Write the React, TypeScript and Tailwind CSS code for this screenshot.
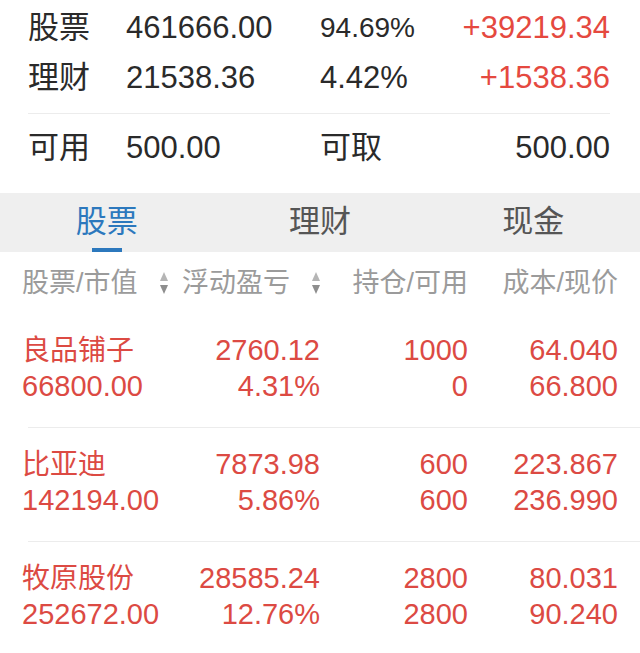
const summary = [
  { label: "股票", value: "461666.00", pct: "94.69%", pctSize: "text-[28px]", gain: "+39219.34" },
  { label: "理财", value: "21538.36", pct: "4.42%", pctSize: "text-[31px]", gain: "+1538.36" },
]

const holdings = [
  { name: "良品铺子", mv: "66800.00", pl: "2760.12", rate: "4.31%", qty: "1000", avail: "0", cost: "64.040", price: "66.800" },
  { name: "比亚迪", mv: "142194.00", pl: "7873.98", rate: "5.86%", qty: "600", avail: "600", cost: "223.867", price: "236.990" },
  { name: "牧原股份", mv: "252672.00", pl: "28585.24", rate: "12.76%", qty: "2800", avail: "2800", cost: "80.031", price: "90.240" },
]

const tabs = ["股票", "理财", "现金"]

const SortIcon = () => (
  <span className="flex flex-col items-center gap-[4px]">
    <svg width="8" height="9" viewBox="0 0 8 9" className="block">
      <path d="M4 0 L8 9 L0 9 Z" fill="#b5b5b5" />
    </svg>
    <svg width="8" height="9" viewBox="0 0 8 9" className="block">
      <path d="M0 0 L8 0 L4 9 Z" fill="#8e8e8e" />
    </svg>
  </span>
)

export default function App() {
  return (
    <div
      className="w-[640px] h-[653px] overflow-hidden bg-white"
      style={{ fontFamily: '"Liberation Sans", "Noto Sans CJK SC", sans-serif' }}
    >
      {/* account summary */}
      <div className="pl-[28px] pr-[30px] pt-[3px]">
        {summary.map((s) => (
          <div key={s.label} className="grid grid-cols-[98px_194px_1fr_auto] items-center h-[50px] text-[#2a2a2a]">
            <span className="text-[31px]">{s.label}</span>
            <span className="text-[31px]">{s.value}</span>
            <span className={s.pctSize}>{s.pct}</span>
            <span className="text-[31px] text-[#e5493f]">{s.gain}</span>
          </div>
        ))}
        <div className="mt-[10px] border-t border-[#ececec] grid grid-cols-[98px_194px_1fr_auto] items-center h-[69px] text-[#2a2a2a]">
          <span className="text-[31px]">可用</span>
          <span className="text-[31px]">500.00</span>
          <span className="text-[31px]">可取</span>
          <span className="text-[31px]">500.00</span>
        </div>
        <div className="h-[11px]" />
      </div>

      {/* tabs */}
      <div className="grid grid-cols-3 h-[59px] bg-[#efefef]">
        {tabs.map((t, i) => (
          <div key={t} className="relative flex items-center justify-center">
            <span className={`text-[31px] ${i === 0 ? "text-[#2c78bd]" : "text-[#555555]"}`}>{t}</span>
            {i === 0 && <span className="absolute bottom-0 left-1/2 -translate-x-1/2 w-[30px] h-[4px] bg-[#2c78bd]" />}
          </div>
        ))}
      </div>

      {/* column header */}
      <div className="grid grid-cols-[150px_148px_148px_150px] items-center h-[62px] px-[22px] text-[27px] text-[#9b9b9b]">
        <div className="flex items-center">
          <span>股票/市值</span>
          <span className="ml-[22px] flex items-center">
            <SortIcon />
          </span>
        </div>
        <div className="flex items-center justify-end">
          <span>浮动盈亏</span>
          <span className="ml-[22px] flex items-center">
            <SortIcon />
          </span>
        </div>
        <div className="text-right">持仓/可用</div>
        <div className="text-right">成本/现价</div>
      </div>

      {/* holdings */}
      {holdings.map((h) => (
        <div key={h.name}>
          <div className="grid grid-cols-[150px_148px_148px_150px] px-[22px] pt-[19px] pb-[22px] text-[29px] text-[#dc4a43]">
            <div className="h-[36px] flex items-center text-[28px]">{h.name}</div>
            <div className="h-[36px] flex items-center justify-end">{h.pl}</div>
            <div className="h-[36px] flex items-center justify-end">{h.qty}</div>
            <div className="h-[36px] flex items-center justify-end">{h.cost}</div>
            <div className="h-[36px] flex items-center">{h.mv}</div>
            <div className="h-[36px] flex items-center justify-end">{h.rate}</div>
            <div className="h-[36px] flex items-center justify-end">{h.avail}</div>
            <div className="h-[36px] flex items-center justify-end">{h.price}</div>
          </div>
          <div className="ml-[28px] border-t border-[#ececec]" />
        </div>
      ))}
    </div>
  )
}
